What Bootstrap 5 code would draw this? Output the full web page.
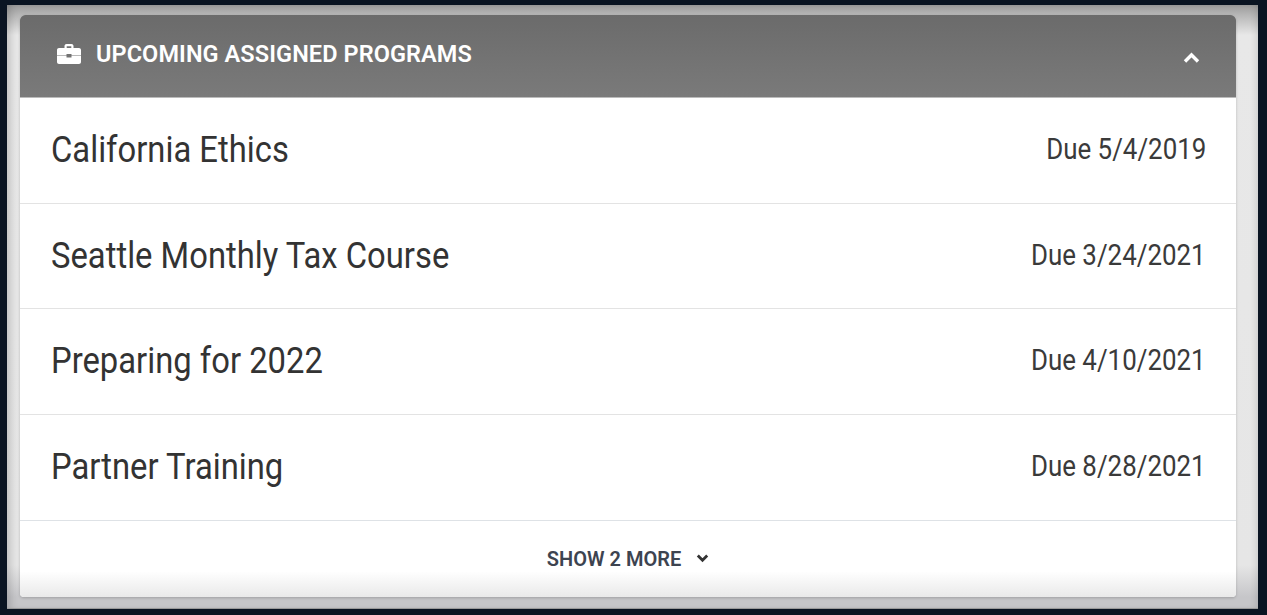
<!DOCTYPE html>
<html lang="en">
<head>
<meta charset="utf-8">
<title>Upcoming Assigned Programs</title>
<link href="https://cdn.jsdelivr.net/npm/bootstrap@5.3.0/dist/css/bootstrap.min.css" rel="stylesheet">
<style>
html,body{height:100%;}
body{background:#0a1422;font-family:Roboto,"Liberation Sans",sans-serif;overflow:hidden;}
.frame-box{height:604px;margin:5px 9px 0 7px;background:linear-gradient(#9c9c9c,#b4b4b4 9px,#e8e8e8 30px,#e6e6e6 560px,#c6c6c9 592px,#c6c6c9);padding:10px 22px 0 13px;box-shadow:inset 8px 0 8px -5px rgba(0,0,0,.18),inset -6px 0 7px -4px rgba(0,0,0,.12);border-bottom:1px solid #999;}
.prog-card{height:582px;border:0;border-radius:6px 6px 4px 4px;box-shadow:0 1px 3px rgba(0,0,0,.2);overflow:hidden;background:#fff;}
.prog-head{height:83px;background:#747474;background-image:linear-gradient(#6b6b6b,#7a7a7a);color:#fff;font-size:23.500px;font-weight:600;padding:0 36px 0 37px;border-bottom:1px solid #bbb;flex:none;}
.prog-head svg{display:block;}
.prog-title-ic{margin-right:15px;margin-bottom:4px;}
.prog-title{letter-spacing:.08px;margin-bottom:3px;}
.prog-chev{margin-top:2px;}
.prog-row{height:105.700px;padding:0 30px 0 30.500px;border-color:#e3e3e3;color:#333;}
.prog-name,.prog-due{display:inline-block;line-height:1;white-space:nowrap;margin-bottom:2px;}
.prog-name{font-size:37px;transform:scaleX(.886);transform-origin:left center;}
.prog-due{font-size:29px;color:#3a3a3a;transform:scaleX(.893);transform-origin:right center;}
.prog-foot{flex:1;color:#3d4450;font-size:20px;font-weight:600;background:linear-gradient(#fff 66%,#e9e9e9);}
.prog-foot svg{margin-left:15px;}
</style>
</head>
<body>
<div class="frame-box">
  <div class="card prog-card d-flex flex-column">
    <div class="prog-head d-flex align-items-center justify-content-between">
      <div class="d-flex align-items-center">
        <svg class="prog-title-ic" width="24" height="20" viewBox="0 0 24 20"><path fill="#fff" d="M7.500 4V2C7.500.9 8.400 0 9.500 0h5c1.100 0 2 .9 2 2v2H22c1.100 0 2 .9 2 2v5.400H14.500V10h-5v1.400H0V6c0-1.100.9-2 2-2zM9.700 4h4.600V2.200H9.700zM0 12h9.500v1.500h5V12H24v6c0 1.100-.9 2-2 2H2c-1.100 0-2-.9-2-2z"/></svg>
        <span class="prog-title">UPCOMING ASSIGNED PROGRAMS</span>
      </div>
      <svg class="prog-chev" width="17" height="11" viewBox="0 0 17 11"><path d="M2 9.500l6.500-6.500L15 9.500" fill="none" stroke="#fff" stroke-width="3.400"/></svg>
    </div>
    <div class="list-group list-group-flush">
      <div class="list-group-item prog-row d-flex align-items-center justify-content-between"><span class="prog-name">California Ethics</span><span class="prog-due">Due 5/4/2019</span></div>
      <div class="list-group-item prog-row d-flex align-items-center justify-content-between"><span class="prog-name">Seattle Monthly Tax Course</span><span class="prog-due">Due 3/24/2021</span></div>
      <div class="list-group-item prog-row d-flex align-items-center justify-content-between"><span class="prog-name">Preparing for 2022</span><span class="prog-due">Due 4/10/2021</span></div>
      <div class="list-group-item prog-row d-flex align-items-center justify-content-between border-bottom"><span class="prog-name">Partner Training</span><span class="prog-due">Due 8/28/2021</span></div>
    </div>
    <div class="prog-foot d-flex align-items-center justify-content-center">
      <span>SHOW 2 MORE</span>
      <svg width="13" height="9" viewBox="0 0 13 9"><path d="M1.800 1.500L6.500 6.200l4.700-4.700" fill="none" stroke="#333" stroke-width="2.800"/></svg>
    </div>
  </div>
</div>
</body>
</html>
